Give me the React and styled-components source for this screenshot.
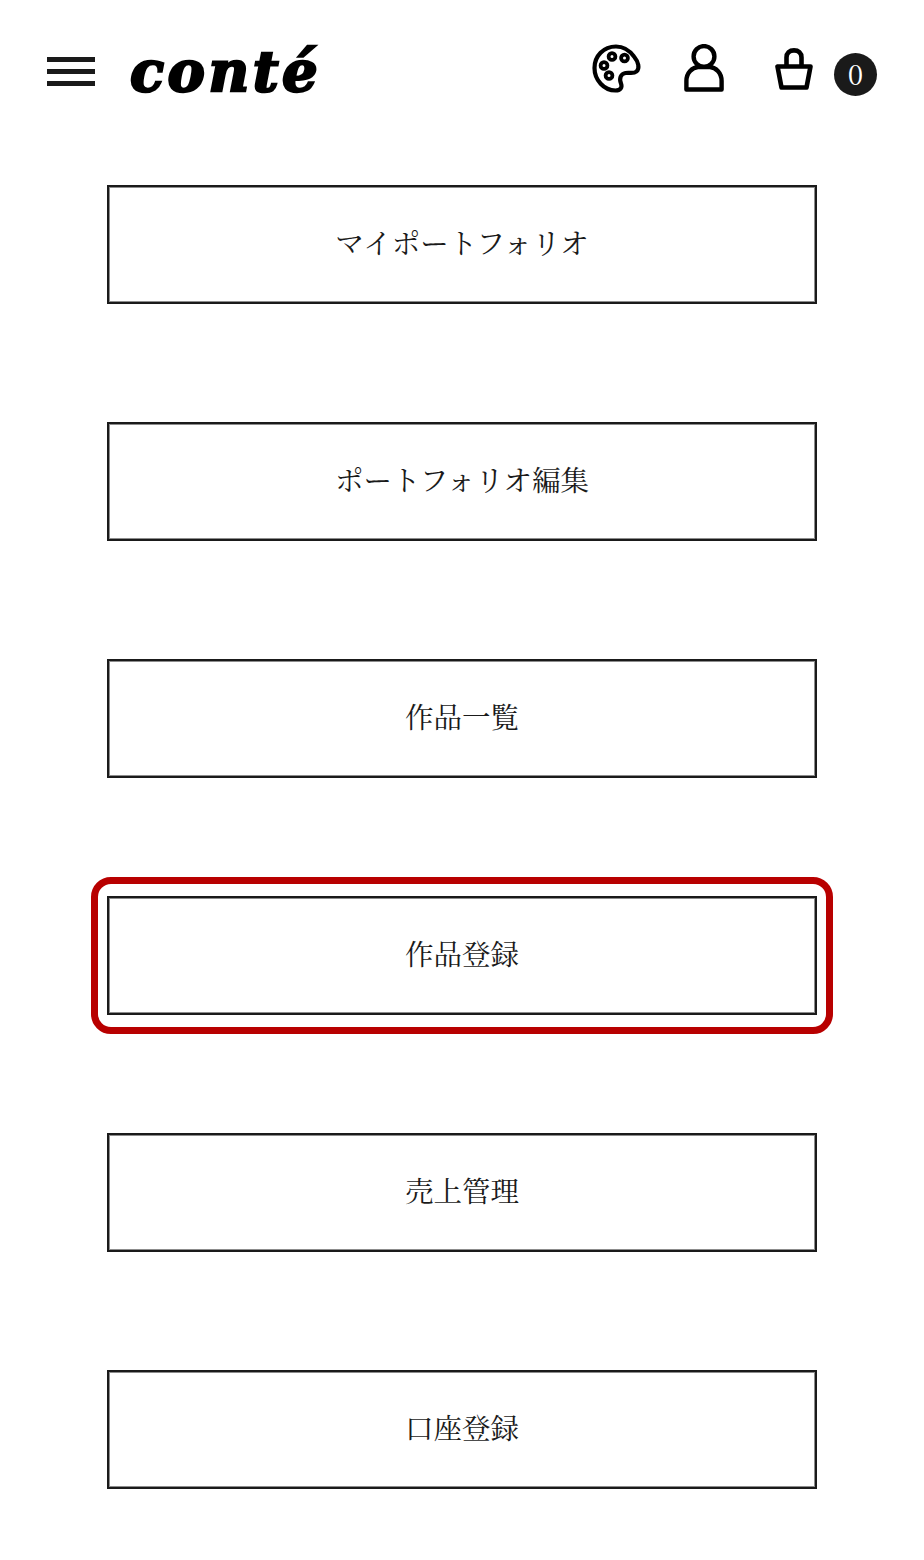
import React from 'react'
import styled, { createGlobalStyle } from 'styled-components'

const MENU = [
  { label: 'マイポートフォリオ' },
  { label: 'ポートフォリオ編集' },
  { label: '作品一覧' },
  { label: '作品登録', marked: true },
  { label: '売上管理' },
  { label: '口座登録' },
]

export default function App() {
  return (
    <Page>
      <GlobalStyle />
      <Header>
        <Left>
          <Burger>
            <span />
            <span />
            <span />
          </Burger>
          <Logo>conté</Logo>
        </Left>
        <Right>
          <PaletteIcon />
          <UserIcon />
          <BagIcon />
          <Count>0</Count>
        </Right>
      </Header>
      <Menu>
        {MENU.map((item) => (
          <MenuButton key={item.label} $marked={item.marked}>
            {item.label}
          </MenuButton>
        ))}
      </Menu>
    </Page>
  )
}

function PaletteIcon() {
  return (
    <PaletteSvg viewBox="0 0 50 50" fill="none" stroke="#000" strokeWidth="4.2">
      <path
        d="M24 2.5C11.5 2.5 2.5 12 2.5 24C2.5 36 12 46.5 23.5 46.5C28.5 46.5 30.5 43.5 29 39.5C27 34.5 28.5 30 33.5 29C37.5 28.2 41.5 30 44.5 27.5C48 24.5 46.5 18 42 12.5C37.5 6.5 31 2.5 24 2.5Z"
        strokeLinejoin="round"
      />
      <circle cx="20" cy="12.5" r="3.4" strokeWidth="3.8" />
      <circle cx="32.5" cy="14" r="3.4" strokeWidth="3.8" />
      <circle cx="12" cy="21.5" r="3.4" strokeWidth="3.8" />
      <circle cx="17" cy="31.5" r="3.4" strokeWidth="3.8" />
    </PaletteSvg>
  )
}

function UserIcon() {
  return (
    <UserSvg viewBox="0 0 40 48" fill="none" stroke="#000" strokeWidth="4.4">
      <circle cx="20" cy="12.5" r="10.4" />
      <path d="M2.4 45.5V37C2.4 28.5 8.5 23.5 14 23H26C31.5 23.5 37.6 28.5 37.6 37V45.5Z" strokeLinejoin="round" />
    </UserSvg>
  )
}

function BagIcon() {
  return (
    <BagSvg viewBox="0 0 38 42" fill="none" stroke="#000" strokeWidth="4.6" strokeLinejoin="round">
      <path d="M11.5 18V9.5C11.5 5 14.5 2.4 19 2.4C23.5 2.4 26.5 5 26.5 9.5V18" />
      <path d="M2.5 18.5H35.5L31.5 39.5H6.5Z" />
    </BagSvg>
  )
}

const GlobalStyle = createGlobalStyle`
  html, body {
    margin: 0;
    padding: 0;
    background: #fff;
  }
  body {
    font-family: "Liberation Serif", "Noto Sans CJK JP", serif;
    color: #1a1a1a;
  }
`

const Page = styled.div`
  width: 924px;
  height: 1560px;
  overflow: hidden;
  background: #fff;
`

const Header = styled.header`
  height: 185px;
  box-sizing: border-box;
  padding: 44px 47px 0 47px;
  display: flex;
  justify-content: space-between;
  align-items: flex-start;
`

const Left = styled.div`
  display: flex;
  align-items: flex-start;
  gap: 35px;
`

const Burger = styled.div`
  width: 48px;
  padding-top: 13px;
  display: flex;
  flex-direction: column;
  gap: 7px;

  span {
    display: block;
    height: 5px;
    background: #1a1a1a;
  }
`

const Logo = styled.div`
  font-family: "DejaVu Serif", serif;
  font-style: italic;
  font-weight: 700;
  font-size: 56px;
  line-height: 54px;
  letter-spacing: 3.5px;
  color: #000;
  -webkit-text-stroke: 2.4px #000;
`

const Right = styled.div`
  display: flex;
  align-items: flex-start;
`

const PaletteSvg = styled.svg`
  width: 50px;
  height: 50px;
  margin-right: 42px;
`

const UserSvg = styled.svg`
  width: 40px;
  height: 48px;
  margin-right: 51px;
`

const BagSvg = styled.svg`
  width: 38px;
  height: 42px;
  margin: 4px 21px 0 0;
`

const Count = styled.div`
  width: 43px;
  height: 43px;
  box-sizing: border-box;
  padding-bottom: 3px;
  margin-top: 9px;
  border-radius: 50%;
  background: #1a1a1a;
  color: #fff;
  font-family: "Noto Serif CJK JP", "Liberation Serif", serif;
  font-size: 28px;
  display: flex;
  align-items: center;
  justify-content: center;
`

const Menu = styled.nav`
  display: flex;
  flex-direction: column;
  gap: 118px;
  padding: 0 107px;
`

const MenuButton = styled.div`
  position: relative;
  height: 119px;
  box-sizing: border-box;
  border: 2px solid #1a1a1a;
  box-shadow: inset 0 0 0 1px rgba(26, 26, 26, 0.5);
  display: flex;
  align-items: center;
  justify-content: center;
  padding-bottom: 6px;
  font-size: 28.5px;
  font-family: "Noto Serif CJK JP", "Liberation Serif", "Noto Sans CJK JP", serif;
  color: #1a1a1a;

  ${(p) =>
    p.$marked &&
    `
    &::after {
      content: "";
      position: absolute;
      inset: -21px -18px;
      border: 7px solid #b80000;
      border-radius: 20px;
    }
  `}
`
